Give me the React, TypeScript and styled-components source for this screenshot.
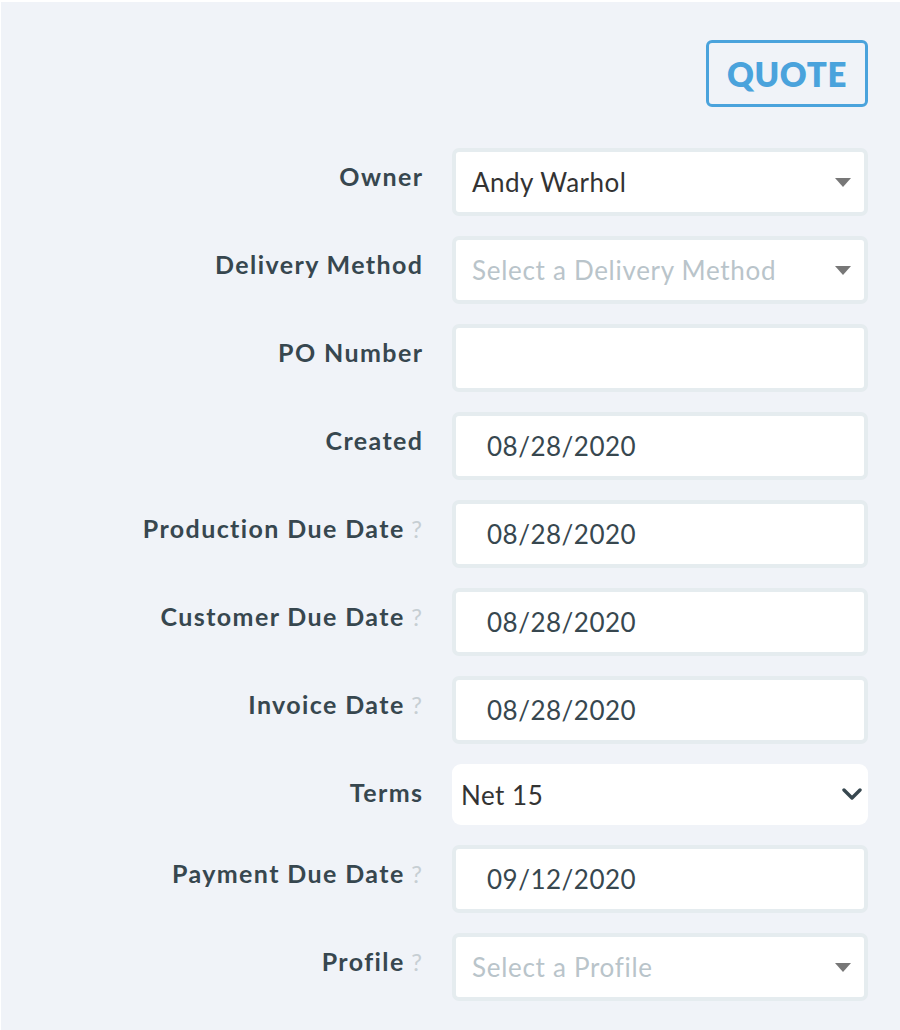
import styled, { createGlobalStyle } from 'styled-components';

const GlobalStyle = createGlobalStyle`
  html, body {
    margin: 0;
    padding: 0;
    background: #ffffff;
  }
  body {
    font-family: Lato, "Open Sans", sans-serif;
    -webkit-font-smoothing: antialiased;
  }
`;

type FieldKind = 'select' | 'text' | 'date' | 'native';

interface Row {
  label: string;
  help?: boolean;
  kind: FieldKind;
  value?: string;
  placeholder?: string;
}

const rows: Row[] = [
  { label: 'Owner', kind: 'select', value: 'Andy Warhol' },
  { label: 'Delivery Method', kind: 'select', placeholder: 'Select a Delivery Method' },
  { label: 'PO Number', kind: 'text' },
  { label: 'Created', kind: 'date', value: '08/28/2020' },
  { label: 'Production Due Date', help: true, kind: 'date', value: '08/28/2020' },
  { label: 'Customer Due Date', help: true, kind: 'date', value: '08/28/2020' },
  { label: 'Invoice Date', help: true, kind: 'date', value: '08/28/2020' },
  { label: 'Terms', kind: 'native', value: 'Net 15' },
  { label: 'Payment Due Date', help: true, kind: 'date', value: '09/12/2020' },
  { label: 'Profile', help: true, kind: 'select', placeholder: 'Select a Profile' },
];

function Caret() {
  return (
    <svg width="16" height="9" viewBox="0 0 16 9">
      <path d="M0 0 H16 L8 9 Z" fill="#777" />
    </svg>
  );
}

function Chevron() {
  return (
    <svg width="20" height="13" viewBox="0 0 20 13">
      <path
        d="M2 2 L10 10 L18 2"
        fill="none"
        stroke="#37474f"
        strokeWidth="3.4"
        strokeLinecap="round"
        strokeLinejoin="round"
      />
    </svg>
  );
}

export default function App() {
  return (
    <>
      <GlobalStyle />
      <Page>
        <Header>
          <QuoteButton>QUOTE</QuoteButton>
        </Header>
        <Form>
          {rows.map((row) => (
            <FormRow key={row.label}>
              <Label>
                <LabelText>{row.label}</LabelText>
                {row.help && <Help>?</Help>}
              </Label>
              {row.kind === 'native' ? (
                <NativeSelect>
                  <Value $dark>{row.value}</Value>
                  <Chevron />
                </NativeSelect>
              ) : (
                <Field $inset={row.kind === 'date' ? 31 : 16}>
                  {row.value ? (
                    <Value $dark={row.kind === 'select'}>{row.value}</Value>
                  ) : (
                    <Placeholder>{row.placeholder}</Placeholder>
                  )}
                  {row.kind === 'select' && <Caret />}
                </Field>
              )}
            </FormRow>
          ))}
        </Form>
      </Page>
    </>
  );
}

const Page = styled.div`
  margin: 2px 0 0 1px;
  min-height: 1028px;
  padding: 38px 32px 0 0;
  box-sizing: border-box;
  background: #f0f3f8;
`;

const Header = styled.div`
  display: flex;
  justify-content: flex-end;
`;

const QuoteButton = styled.button`
  width: 162px;
  height: 67px;
  box-sizing: border-box;
  border: 3px solid #4aa3dc;
  border-radius: 6px;
  background: transparent;
  color: #4aa3dc;
  font-family: Lato, "Open Sans", sans-serif;
  font-size: 33px;
  font-weight: 800;
  letter-spacing: 0.6px;
  padding: 0;
`;

const Form = styled.div`
  display: flex;
  flex-direction: column;
  gap: 20px;
  margin-top: 41px;
`;

const FormRow = styled.div`
  display: grid;
  grid-template-columns: 1fr 416px;
  column-gap: 30px;
  align-items: start;
`;

const Label = styled.div`
  text-align: right;
  padding-top: 13px;
  line-height: 30px;
  font-size: 25px;
  font-weight: 700;
  color: #37474f;
  white-space: nowrap;
`;

const LabelText = styled.span`
  letter-spacing: 1.4px;
  margin-right: -1.4px;
`;

const Help = styled.span`
  margin-left: 8px;
  font-weight: 400;
  font-size: 24px;
  color: #c6ced3;
`;

const Field = styled.div<{ $inset: number }>`
  height: 68px;
  box-sizing: border-box;
  display: flex;
  align-items: center;
  justify-content: space-between;
  padding: 0 13px 0 ${(p) => p.$inset}px;
  background: #ffffff;
  border: 4px solid #e5ecef;
  border-radius: 7px;
`;

const NativeSelect = styled.div`
  height: 61px;
  box-sizing: border-box;
  display: flex;
  align-items: center;
  justify-content: space-between;
  padding: 0 6px 0 9px;
  background: #ffffff;
  border-radius: 9px;
`;

const Value = styled.span<{ $dark?: boolean }>`
  font-size: 26px;
  letter-spacing: 0.5px;
  color: ${(p) => (p.$dark ? '#333333' : '#37474f')};
`;

const Placeholder = styled.span`
  font-size: 26px;
  letter-spacing: 0.7px;
  color: #b9c4ca;
`;
